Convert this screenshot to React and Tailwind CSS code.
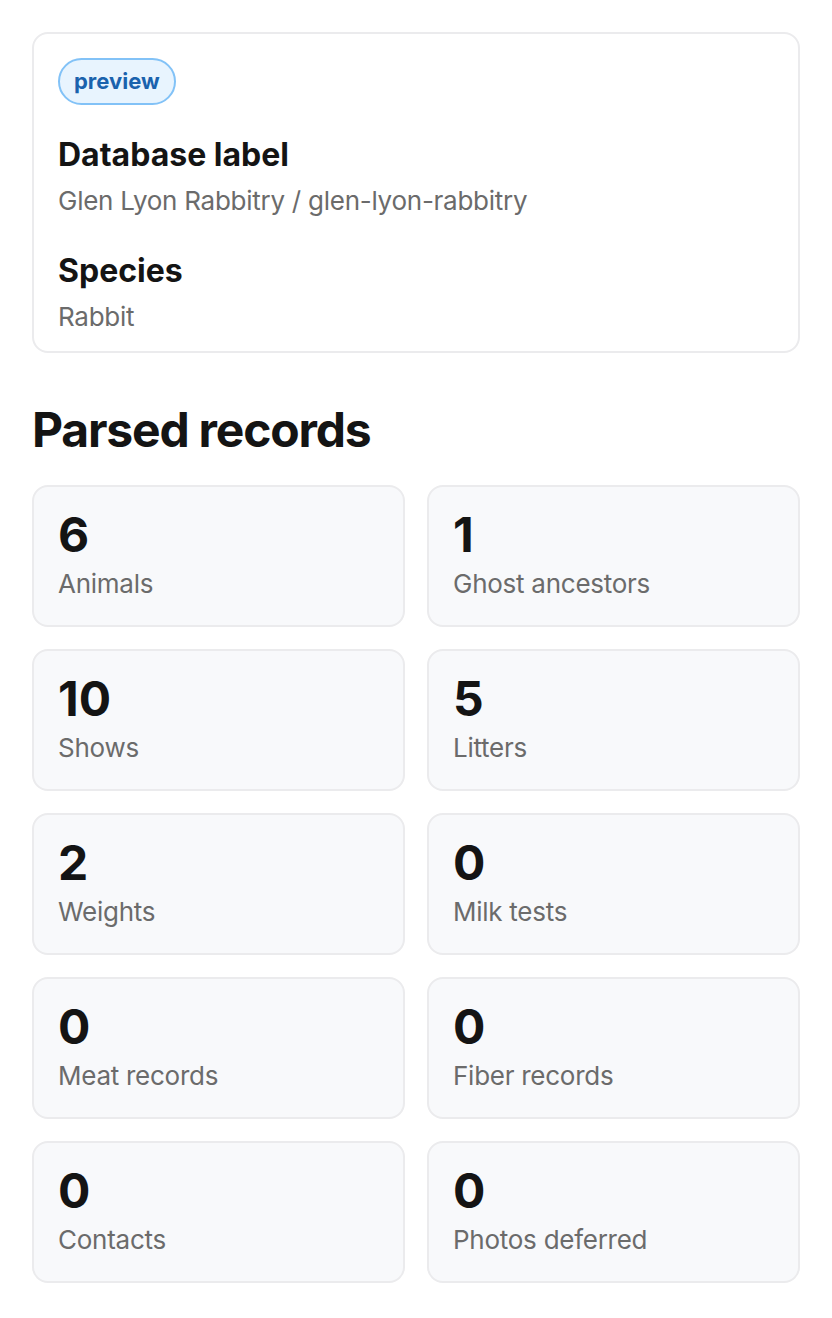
const stats = [
  { value: 6, label: 'Animals' },
  { value: 1, label: 'Ghost ancestors' },
  { value: 10, label: 'Shows' },
  { value: 5, label: 'Litters' },
  { value: 2, label: 'Weights' },
  { value: 0, label: 'Milk tests' },
  { value: 0, label: 'Meat records' },
  { value: 0, label: 'Fiber records' },
  { value: 0, label: 'Contacts' },
  { value: 0, label: 'Photos deferred' },
];

function Field({ label, value, className = '' }) {
  return (
    <div className={className}>
      <h3 className="text-[32px] leading-[48px] font-bold text-[#141414]">{label}</h3>
      <p className="mt-[2px] text-[26px] leading-[40px] tracking-[-0.01em] text-[#6b6b6b]">{value}</p>
    </div>
  );
}

function StatCard({ value, label }) {
  return (
    <div className="rounded-[16px] border-2 border-[#ebebed] bg-[#f8f9fb] px-[24px] pt-[24px] pb-[24px]">
      <div className="text-[48px] leading-[48px] font-bold text-[#141414]">{value}</div>
      <div className="mt-[8px] text-[26px] leading-[34px] tracking-[-0.01em] text-[#6b6b6b]">{label}</div>
    </div>
  );
}

export default function App() {
  return (
    <div className="min-h-screen bg-white px-[32px] pt-[32px] pb-[35px] font-[Inter,sans-serif] antialiased">
      <div className="rounded-[16px] border-2 border-[#ebebed] bg-white px-[24px] pt-[24px] pb-[14px]">
        <span className="inline-flex h-[47px] items-center rounded-full border-2 border-[#82c2f7] bg-[#e8f4fe] px-[14px] text-[22px] font-bold text-[#1a62ad]">
          preview
        </span>
        <Field className="mt-[26px]" label="Database label" value="Glen Lyon Rabbitry / glen-lyon-rabbitry" />
        <Field className="mt-[26px]" label="Species" value="Rabbit" />
      </div>

      <h2 className="mt-[49px] text-[48px] leading-[56px] font-bold tracking-tight text-[#141414]">Parsed records</h2>

      <div className="mt-[27px] grid grid-cols-2 gap-[22px]">
        {stats.map((s, idx) => (
          <StatCard key={idx} value={s.value} label={s.label} />
        ))}
      </div>
    </div>
  );
}
